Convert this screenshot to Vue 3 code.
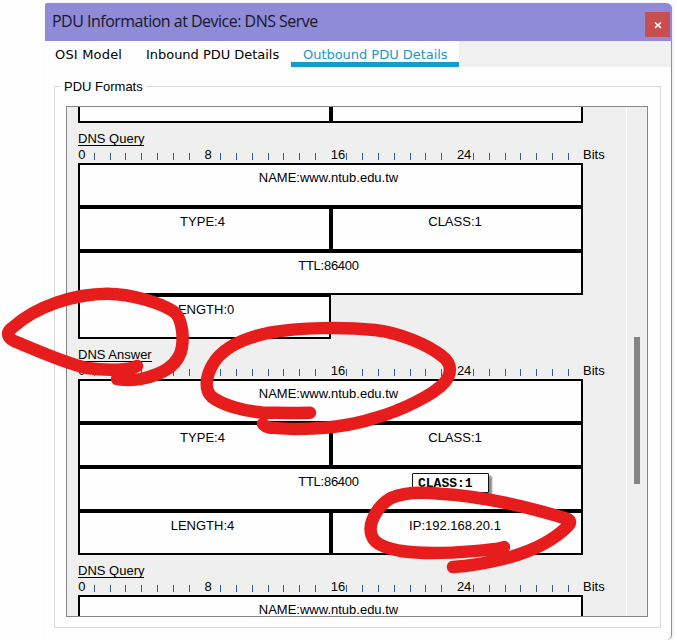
<script setup>
const ticks = [94, 110, 125, 141, 157, 173, 189, 220, 236, 252, 268, 283, 299, 315, 346, 362, 378, 394, 410, 425, 441, 473, 489, 505, 520, 536, 552, 568]
const marks = [0, 8, 16, 24]
const sections = [
  { title: 'DNS Query', cells: [['NAME:www.ntub.edu.tw', true], ['TYPE:4'], ['CLASS:1'], ['TTL:86400', true, true], ['LENGTH:0']] },
  { title: 'DNS Answer', cells: [['NAME:www.ntub.edu.tw', true], ['TYPE:4'], ['CLASS:1'], ['TTL:86400', true, true], ['LENGTH:4'], ['IP:192.168.20.1']] },
  { title: 'DNS Query', cells: [['NAME:www.ntub.edu.tw', true]] }
]
</script>

<template>
  <main class="page">
    <div class="window">
      <header class="titlebar">
        <span class="title">PDU Information at Device: DNS Serve</span>
        <button class="close" aria-label="Close">
          <svg width="8" height="8" viewBox="0 0 8 8"><path d="M1 1.5L7 6.8M7 1.5L1 6.8" stroke="#fff" stroke-width="1.6" /></svg>
        </button>
      </header>
      <nav class="tabs">
        <span class="tab first">OSI Model</span>
        <span class="tab second">Inbound PDU Details</span>
        <span class="tab active">Outbound PDU Details</span>
      </nav>
      <fieldset class="group">
        <legend>PDU Formats</legend>
        <div class="viewport">
          <div class="content">
            <div class="grid partial"><div class="cell"></div><div class="cell"></div></div>
            <section v-for="(s, i) in sections" :key="i">
              <div class="heading"><span>{{ s.title }}</span></div>
              <svg class="ruler" width="548" height="17" viewBox="78 0 548 17">
                <rect v-for="t in ticks" :key="t" :x="t" y="7" width="1" height="7" fill="#2f5ba8" />
                <text v-for="(m, j) in marks" :key="m" :x="78.3 + j * 126.2" y="13">{{ m }}</text>
                <text x="583" y="13">Bits</text>
              </svg>
              <div class="grid">
                <div v-for="c in s.cells" :key="c[0]" class="cell" :class="{ wide: c[1], tight: c[2] }">{{ c[0] }}</div>
              </div>
            </section>
          </div>
          <div class="scroll"><div class="thumb"></div></div>
        </div>
      </fieldset>
    </div>
    <div class="tooltip">CLASS:1</div>
    <svg class="ink" width="677" height="640" viewBox="0 0 677 640">
      <path d="M137 366C131 370 108 371 87 368C64 363 36 350 14 341C6 337 7 332 12 328C37 305 76 294 107 293.7C133 294 160 303 173 311C181 316 184 333 182 347C179 366 160 375 141 379C131 381 124 380 117 379" />
      <path d="M310 412.7C294 413 278 413 262 412.5C244 411 222 405 212 397C203 389 207 374 213 364C223 347 245 338 268 333C300 327 345 327 375 330C401 333 428 345 442 356C453 364 451 374 445 382C434 395 400 411 375 418C347 427 320 429 295 429C286 429 276 428 269 427.5C267 427 265 426 263 424" />
      <path d="M504 547C496 550 456 553 433 553C415 553 394 551 383 546C370 541 369 530 372 521C376 511 382 503 391 498C404 492 424 492 440 493.7C480 496 525 506 566 518.5C571 520 571 523 568 526C550 544 527 553 503 559C487 563 470 566 453 567" />
    </svg>
  </main>
</template>

<style>
body { margin: 0; background: #fefefe; overflow: hidden; }
</style>

<style scoped>
* { box-sizing: border-box; }
.page { position: relative; width: 677px; height: 640px; padding: 3px 5px 0 45px; overflow: hidden; background: #fefefe; font-family: "Liberation Sans", Arial, sans-serif; font-size: 13px; color: #000; }
.window { width: 627px; height: 637px; border-right: 1px solid #8d88cf; border-radius: 2px 6px 5px 0; box-shadow: 1px 0 3px #e8e8f2; background: #fefefe; }
.titlebar { width: 627px; height: 38px; padding: 0 2px 0 7px; display: flex; justify-content: space-between; background: #8f8bd8; border-radius: 2px 6px 0 0; }
.title { font: 16px/37px "Open Sans", sans-serif; color: #17162a; letter-spacing: -.51px; white-space: nowrap; }
.close { width: 25px; height: 25px; margin-top: 9px; padding: 0; border: 0; background: #c84f50; display: flex; align-items: center; justify-content: center; }
.tabs { height: 26px; display: flex; background: #f0f0f0; }
.tab { font: 13px/27px "DejaVu Sans", sans-serif; letter-spacing: -.03px; background: #fefefe; white-space: nowrap; height: 26px; }
.first { width: 91px; padding-left: 10px; letter-spacing: .18px; }
.second { width: 155px; padding-left: 10px; }
.active { width: 168px; padding-left: 12px; color: #1a97c9; border-bottom: 5px solid #109dd1; }
.group { margin: 12px 0 0 9px; padding: 0 11px 11px; width: 607px; height: 549px; min-width: 0; border: 1px solid #dadada; }
legend { height: 15px; margin-left: -5px; padding: 0 3px; line-height: 15px; font-size: 13px; }
.viewport { width: 582px; height: 511px; margin-top: 12px; border: 1px solid #85868a; background: #efefef; display: flex; overflow: hidden; }
.content { width: 559px; padding-left: 11px; flex: none; }
.scroll { width: 21px; border-left: 1px solid #fff; padding: 230px 0 0 7px; }
.thumb { width: 6px; height: 147px; background: #858585; }
.grid { width: 505px; display: grid; grid-template-columns: 253px 252px; }
.cell { height: 44px; border: 2px solid #000; background: #fefefe; text-align: center; line-height: 25px; padding-right: 4px; }
.wide { grid-column: span 2; }
.tight { letter-spacing: -.25px; }
.partial { height: 16px; }
.partial .cell { height: 16px; border-top: 0; }
.heading { height: 23px; padding-top: 8px; line-height: 15px; }
.heading span { display: inline-block; height: 15px; border-bottom: 1px solid #000; }
.ruler { display: block; overflow: visible; }
.ruler text { font: 13px "Liberation Sans", Arial, sans-serif; }
.tooltip { position: absolute; left: 412px; top: 473px; width: 77px; height: 20px; border: 1px solid #111; border-radius: 1px; padding-left: 5px; background: #fefefe; box-shadow: 3px 3px 2px #888; font: bold 13px/20px "Liberation Mono", monospace; }
.ink { position: absolute; left: 0; top: 0; }
.ink path { fill: none; stroke: #e71d1d; stroke-width: 12.5; stroke-linecap: round; stroke-linejoin: round; }
</style>
